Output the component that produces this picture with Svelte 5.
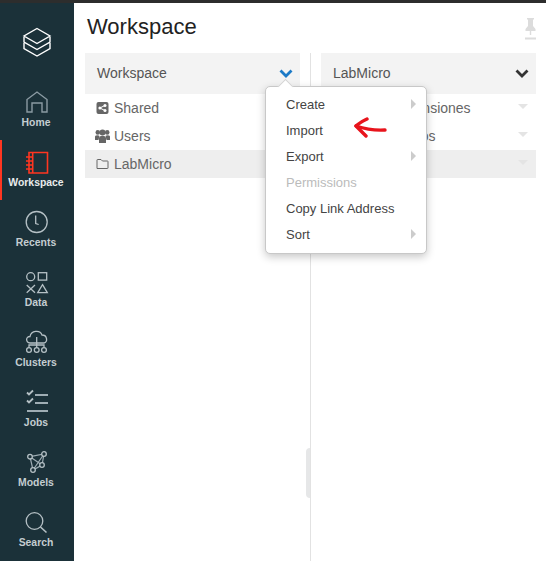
<script>
  const nav = [
    { label: 'Home', icon: 'home' },
    { label: 'Workspace', icon: 'book', active: true },
    { label: 'Recents', icon: 'clock' },
    { label: 'Data', icon: 'data' },
    { label: 'Clusters', icon: 'cloud' },
    { label: 'Jobs', icon: 'jobs' },
    { label: 'Models', icon: 'models' },
    { label: 'Search', icon: 'search' }
  ];
  const menu = [
    { label: 'Create', sub: true },
    { label: 'Import' },
    { label: 'Export', sub: true },
    { label: 'Permissions', disabled: true },
    { label: 'Copy Link Address' },
    { label: 'Sort', sub: true }
  ];
</script>

<div class="page">
  <div class="topbar"></div>
  <div class="main">
    <aside class="sidebar">
      <div class="logo">
        <svg width="32" height="32" viewBox="0 0 32 32" fill="none" stroke="#fff" stroke-width="1.4">
          <path d="M16 3.5 L29 11 L16 18.5 L3 11 Z" />
          <path d="M3 12 V17 L16 24.5 L29 17 V12" />
          <path d="M3 18 V23.5 L16 31 L29 23.5 V18" />
        </svg>
      </div>
      {#each nav as item}
        <div class="nav" class:active={item.active}>
          <svg class="ico" width="26" height="26" viewBox="-1 -1 26 26" fill="none" stroke={item.active ? '#ff3621' : '#b5c0c5'} stroke-width="1.3">
            {#if item.icon === 'home'}
              <path d="M3 23 V10.5 L13 3 L23 10.5 V23 H18 V14 H8 V23 Z" stroke="#8b9ba3" stroke-width="1.4" />
            {:else if item.icon === 'book'}
              <path d="M5 3.5 H23.5 V24 H5 Z" stroke-width="1.6" />
              <path d="M8.7 3.5 V24" stroke-width="1.6" />
              <path d="M2 8 H9 M2 12 H9 M2 16 H9 M2 20 H9" stroke-width="1.6" />
            {:else if item.icon === 'clock'}
              <circle cx="12.7" cy="13" r="10.5" />
              <path d="M11.7 6.5 V14.5 L14.7 15.5" />
            {:else if item.icon === 'data'}
              <circle cx="6.7" cy="7.7" r="4" />
              <rect x="14.3" y="3.7" width="8.4" height="7.4" />
              <path d="M2.7 16 L11 23.7 M11 16 L2.7 23.7" />
              <path d="M18.5 15.7 L23.3 23.7 H13.7 Z" />
            {:else if item.icon === 'cloud'}
              <path d="M6 14 C1.5 13.5 1.5 7.5 6 7.5 C7 1.5 16 0.5 18 6 C23.5 6 24 13.5 20 14 Z" />
              <path d="M12.7 8 V18.5 M5 18.5 V16 H20 V18.5" />
              <circle cx="5" cy="21" r="2.4" />
              <circle cx="12.7" cy="21" r="2.4" />
              <circle cx="20" cy="21" r="2.4" />
            {:else if item.icon === 'jobs'}
              <path d="M3 3.5 L5 5.5 L9 1.5 M3 11.5 L5 13.5 L9 9.5" stroke-width="1.8" />
              <path d="M11 6 H24 M11 14 H24 M3 22 H24" stroke="#9fadb4" stroke-width="2.2" />
            {:else if item.icon === 'models'}
              <path d="M6 7.7 L20 5 L18 16 L9 21 Z M6 7.7 L18 16 M20 5 L9 21" stroke="#9fadb4" stroke-width="1.2" />
              <circle cx="6" cy="7.7" r="2.3" fill="#1b3139" />
              <circle cx="20" cy="5" r="2.3" fill="#1b3139" />
              <circle cx="18" cy="16" r="2.3" fill="#1b3139" />
              <circle cx="9" cy="21" r="2.3" fill="#1b3139" />
            {:else}
              <circle cx="10.5" cy="12" r="8.3" />
              <path d="M16.5 18 L22.5 23.5" stroke-width="1.6" />
            {/if}
          </svg>
          <span class="nav-label">{item.label}</span>
        </div>
      {/each}
    </aside>

    <main class="content">
      <header class="title-row">
        <h1>Workspace</h1>
        <svg class="pin" width="11" height="22" viewBox="0 0 11 22" fill="#dcdcdc">
          <path d="M2 0 H9 V1.5 H8 V8 L10.5 11 V13 H6.2 V17 H4.8 V13 H0.5 V11 L3 8 V1.5 H2 Z" />
          <rect x="0" y="19.5" width="11" height="2" />
        </svg>
      </header>
      <div class="browser">
        <section class="col left">
          <div class="col-head">
            <span>Workspace</span>
            <svg class="chev" width="14" height="10" viewBox="0 0 14 10" fill="none" stroke="#1b7ac7" stroke-width="2.8"><path d="M1.5 1.5 L7 7 L12.5 1.5" /></svg>
          </div>
          <div class="row">
            <svg class="row-ico" width="15" height="14" viewBox="0 0 14 14"><rect x="1" y="1" width="12" height="12" rx="2" fill="#666" /><circle cx="4.4" cy="7" r="1.5" fill="#fff" /><circle cx="9.5" cy="4.4" r="1.5" fill="#fff" /><circle cx="9.5" cy="9.6" r="1.5" fill="#fff" /><path d="M4.4 7 L9.5 4.4 M4.4 7 L9.5 9.6" stroke="#fff" /></svg>
            <span>Shared</span>
          </div>
          <div class="row">
            <svg class="row-ico" width="15" height="14" viewBox="0 0 15 14" fill="#666"><circle cx="2.8" cy="3.4" r="2.3" /><circle cx="12.2" cy="3.4" r="2.3" /><circle cx="7.5" cy="3.6" r="3" /><path d="M0 7.5 Q0 6.2 3 6.2 L4.5 7 L3.5 11 H0 Z M15 7.5 Q15 6.2 12 6.2 L10.5 7 L11.5 11 H15 Z" /><path d="M4 8.5 Q4.5 6.8 7.5 6.8 Q10.5 6.8 11 8.5 V14 H4 Z" /></svg>
            <span>Users</span>
          </div>
          <div class="row selected">
            <svg class="row-ico" width="15" height="14" viewBox="0 0 14 14" fill="none" stroke="#666"><path d="M1.5 11.5 V3 Q1.5 2.5 2 2.5 H5.5 L7 4 H12 Q12.5 4 12.5 4.5 V11 Q12.5 11.5 12 11.5 Z" /></svg>
            <span>LabMicro</span>
          </div>
        </section>
        <div class="divider"><div class="handle"></div></div>
        <section class="col right">
          <div class="col-head">
            <span>LabMicro</span>
            <svg class="chev" width="14" height="10" viewBox="0 0 14 10" fill="none" stroke="#333" stroke-width="2.8"><path d="M1.5 1.5 L7 7 L12.5 1.5" /></svg>
          </div>
          <div class="row plain"><span>Informe  Pensiones</span><i class="caret"></i></div>
          <div class="row plain"><span>Experimentos</span><i class="caret"></i></div>
          <div class="row plain selected"><span>Notas</span><i class="caret"></i></div>
        </section>
      </div>
    </main>
  </div>

  <div class="menu">
    <div class="menu-tip"></div>
    {#each menu as m}
      <div class="menu-item" class:disabled={m.disabled}>
        <span>{m.label}</span>
        {#if m.sub}<i class="sub"></i>{/if}
      </div>
    {/each}
  </div>

  <svg class="arrow" width="34" height="22" viewBox="0 0 34 22" fill="none" stroke="#e8141c" stroke-width="3.4" stroke-linecap="round" stroke-linejoin="round">
    <path d="M32 13 C24 13.5 12 12 3 9" />
    <path d="M14 2 C10 4 6 6 3 9 C6 12 10 16 13 19" />
  </svg>
</div>

<style>
  :global(body) {
    margin: 0;
    background: #fff;
    font-family: "Liberation Sans", Arial, sans-serif;
  }
  .page {
    position: relative;
    width: 546px;
    height: 561px;
    overflow: hidden;
    display: flex;
    flex-direction: column;
  }
  .topbar {
    height: 3px;
    background: #2d2d2d;
    flex: none;
  }
  .main {
    flex: 1;
    display: flex;
    min-height: 0;
  }
  .sidebar {
    width: 74px;
    flex: none;
    background: #1b3139;
    display: flex;
    flex-direction: column;
  }
  .logo {
    height: 77px;
    display: flex;
    align-items: flex-start;
    justify-content: center;
    flex: none;
    padding-top: 22px;
    box-sizing: border-box;
  }
  .nav {
    height: 60px;
    flex: none;
    display: flex;
    flex-direction: column;
    align-items: center;
    justify-content: flex-end;
    padding-bottom: 11px;
    padding-right: 4px;
    box-sizing: border-box;
    gap: 2px;
    color: #c4cdd1;
    font-size: 10.4px;
    font-weight: 700;
    border-left: 2px solid transparent;
  }
  .nav.active {
    border-left-color: #ff3621;
    color: #e8ebec;
  }
  .ico {
    display: block;
  }
  .nav-label {
    line-height: 13px;
  }
  .content {
    flex: 1;
    min-width: 0;
    display: flex;
    flex-direction: column;
  }
  .title-row {
    height: 50px;
    flex: none;
    display: flex;
    align-items: center;
    justify-content: space-between;
    padding: 0 10px 2px 13px;
    box-sizing: border-box;
  }
  h1 {
    margin: 0;
    font-size: 22px;
    font-weight: 400;
    color: #222;
  }
  .pin {
    display: block;
    margin-top: 3px;
  }
  .browser {
    flex: 1;
    display: flex;
    min-height: 0;
    padding: 0 10px 0 11px;
  }
  .col {
    width: 215px;
    flex: none;
  }
  .divider {
    position: relative;
    width: 1px;
    margin: 0 10px;
    background: #e2e2e2;
    flex: none;
  }
  .handle {
    position: absolute;
    right: 1px;
    top: 395px;
    width: 4px;
    height: 50px;
    background: #e6e7e8;
    border-radius: 4px 0 0 4px;
  }
  .col-head {
    height: 41px;
    background: #f3f3f3;
    display: flex;
    align-items: center;
    justify-content: space-between;
    padding: 0 7px 2px 12px;
    box-sizing: border-box;
    font-size: 14px;
    color: #555;
  }
  .chev {
    display: block;
    margin-top: 2px;
  }
  .row {
    height: 28px;
    display: flex;
    align-items: center;
    gap: 4px;
    padding-left: 10px;
    font-size: 14px;
    color: #666;
  }
  .row-ico {
    width: 15px;
    flex: none;
  }
  .row.selected {
    background: #eee;
  }
  .row.plain {
    padding-left: 29px;
    padding-right: 8px;
    justify-content: space-between;
    white-space: pre;
  }
  .caret {
    width: 0;
    height: 0;
    border-left: 5px solid transparent;
    border-right: 5px solid transparent;
    border-top: 5px solid #e4e4e4;
    margin-bottom: 3px;
  }
  .menu {
    position: absolute;
    left: 265px;
    top: 86px;
    width: 162px;
    height: 168px;
    box-sizing: border-box;
    padding: 4px 0 6px;
    background: #fff;
    border: 1px solid #c8c8c8;
    border-radius: 5px;
    box-shadow: 0 3px 8px rgba(0, 0, 0, 0.22);
  }
  .menu-tip {
    position: absolute;
    left: 14px;
    top: -6px;
    width: 10px;
    height: 10px;
    background: #fff;
    border-left: 1px solid #d4d4d4;
    border-top: 1px solid #d4d4d4;
    transform: rotate(45deg);
  }
  .menu-item {
    position: relative;
    height: 26px;
    display: flex;
    align-items: center;
    justify-content: space-between;
    padding: 0 10px 0 20px;
    font-size: 13px;
    color: #444;
  }
  .menu-item.disabled {
    color: #bbb;
  }
  .sub {
    width: 0;
    height: 0;
    border-top: 5px solid transparent;
    border-bottom: 5px solid transparent;
    border-left: 5px solid #ccc;
  }
  .arrow {
    position: absolute;
    left: 353px;
    top: 117px;
  }
</style>
